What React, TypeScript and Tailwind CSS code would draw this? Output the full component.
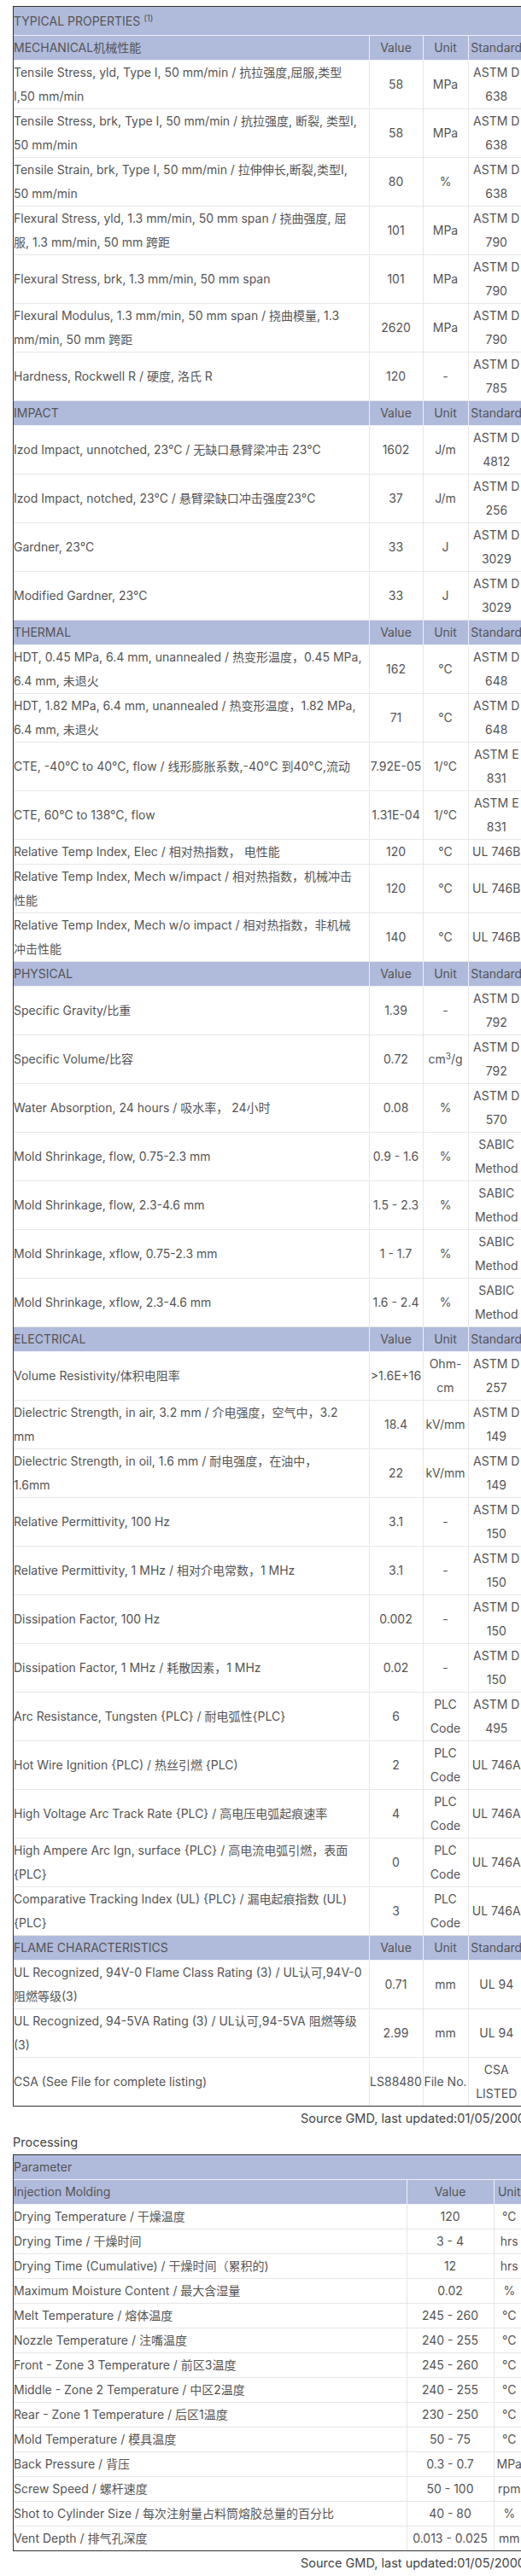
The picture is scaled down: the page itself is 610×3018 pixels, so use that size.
import React from "react";

type Row = [string, string, React.ReactNode, string];

// "\n" marks where the description wraps in the original layout
const sections: { title: string; rows: Row[] }[] = [
  {
    title: "MECHANICAL机械性能",
    rows: [
      ["Tensile Stress, yld, Type I, 50 mm/min / 抗拉强度,屈服,类型\nI,50 mm/min", "58", "MPa", "ASTM D 638"],
      ["Tensile Stress, brk, Type I, 50 mm/min / 抗拉强度, 断裂, 类型I,\n50 mm/min", "58", "MPa", "ASTM D 638"],
      ["Tensile Strain, brk, Type I, 50 mm/min / 拉伸伸长,断裂,类型I,\n50 mm/min", "80", "%", "ASTM D 638"],
      ["Flexural Stress, yld, 1.3 mm/min, 50 mm span / 挠曲强度, 屈\n服, 1.3 mm/min, 50 mm 跨距", "101", "MPa", "ASTM D 790"],
      ["Flexural Stress, brk, 1.3 mm/min, 50 mm span", "101", "MPa", "ASTM D 790"],
      ["Flexural Modulus, 1.3 mm/min, 50 mm span / 挠曲模量, 1.3\nmm/min, 50 mm 跨距", "2620", "MPa", "ASTM D 790"],
      ["Hardness, Rockwell R / 硬度, 洛氏 R", "120", "-", "ASTM D 785"],
    ],
  },
  {
    title: "IMPACT",
    rows: [
      ["Izod Impact, unnotched, 23°C / 无缺口悬臂梁冲击 23°C", "1602", "J/m", "ASTM D 4812"],
      ["Izod Impact, notched, 23°C / 悬臂梁缺口冲击强度23°C", "37", "J/m", "ASTM D 256"],
      ["Gardner, 23°C", "33", "J", "ASTM D 3029"],
      ["Modified Gardner, 23°C", "33", "J", "ASTM D 3029"],
    ],
  },
  {
    title: "THERMAL",
    rows: [
      ["HDT, 0.45 MPa, 6.4 mm, unannealed / 热变形温度，0.45 MPa,\n6.4 mm, 未退火", "162", "°C", "ASTM D 648"],
      ["HDT, 1.82 MPa, 6.4 mm, unannealed / 热变形温度，1.82 MPa,\n6.4 mm, 未退火", "71", "°C", "ASTM D 648"],
      ["CTE, -40°C to 40°C, flow / 线形膨胀系数,-40°C 到40°C,流动", "7.92E-05", "1/°C", "ASTM E 831"],
      ["CTE, 60°C to 138°C, flow", "1.31E-04", "1/°C", "ASTM E 831"],
      ["Relative Temp Index, Elec / 相对热指数， 电性能", "120", "°C", "UL 746B"],
      ["Relative Temp Index, Mech w/impact / 相对热指数，机械冲击\n性能", "120", "°C", "UL 746B"],
      ["Relative Temp Index, Mech w/o impact / 相对热指数，非机械\n冲击性能", "140", "°C", "UL 746B"],
    ],
  },
  {
    title: "PHYSICAL",
    rows: [
      ["Specific Gravity/比重", "1.39", "-", "ASTM D 792"],
      ["Specific Volume/比容", "0.72", <>cm<sup className="text-[10px]">3</sup>/g</>, "ASTM D 792"],
      ["Water Absorption, 24 hours / 吸水率， 24小时", "0.08", "%", "ASTM D 570"],
      ["Mold Shrinkage, flow, 0.75-2.3 mm", "0.9 - 1.6", "%", "SABIC Method"],
      ["Mold Shrinkage, flow, 2.3-4.6 mm", "1.5 - 2.3", "%", "SABIC Method"],
      ["Mold Shrinkage, xflow, 0.75-2.3 mm", "1 - 1.7", "%", "SABIC Method"],
      ["Mold Shrinkage, xflow, 2.3-4.6 mm", "1.6 - 2.4", "%", "SABIC Method"],
    ],
  },
  {
    title: "ELECTRICAL",
    rows: [
      ["Volume Resistivity/体积电阻率", ">1.6E+16", <>Ohm-<br />cm</>, "ASTM D 257"],
      ["Dielectric Strength, in air, 3.2 mm / 介电强度，空气中，3.2\nmm", "18.4", "kV/mm", "ASTM D 149"],
      ["Dielectric Strength, in oil, 1.6 mm / 耐电强度，在油中，\n1.6mm", "22", "kV/mm", "ASTM D 149"],
      ["Relative Permittivity, 100 Hz", "3.1", "-", "ASTM D 150"],
      ["Relative Permittivity, 1 MHz / 相对介电常数，1 MHz", "3.1", "-", "ASTM D 150"],
      ["Dissipation Factor, 100 Hz", "0.002", "-", "ASTM D 150"],
      ["Dissipation Factor, 1 MHz / 耗散因素，1 MHz", "0.02", "-", "ASTM D 150"],
      ["Arc Resistance, Tungsten {PLC} / 耐电弧性{PLC}", "6", "PLC Code", "ASTM D 495"],
      ["Hot Wire Ignition {PLC) / 热丝引燃 {PLC)", "2", "PLC Code", "UL 746A"],
      ["High Voltage Arc Track Rate {PLC} / 高电压电弧起痕速率", "4", "PLC Code", "UL 746A"],
      ["High Ampere Arc Ign, surface {PLC} / 高电流电弧引燃，表面\n{PLC}", "0", "PLC Code", "UL 746A"],
      ["Comparative Tracking Index (UL) {PLC} / 漏电起痕指数 (UL)\n{PLC}", "3", "PLC Code", "UL 746A"],
    ],
  },
  {
    title: "FLAME CHARACTERISTICS",
    rows: [
      ["UL Recognized, 94V-0 Flame Class Rating (3) / UL认可,94V-0\n阻燃等级(3)", "0.71", "mm", "UL 94"],
      ["UL Recognized, 94-5VA Rating (3) / UL认可,94-5VA 阻燃等级\n(3)", "2.99", "mm", "UL 94"],
      ["CSA (See File for complete listing)", "LS88480", "File No.", "CSA LISTED"],
    ],
  },
];

const processing: [string, string, string][] = [
  ["Drying Temperature / 干燥温度", "120", "°C"],
  ["Drying Time / 干燥时间", "3 - 4", "hrs"],
  ["Drying Time (Cumulative) / 干燥时间（累积的)", "12", "hrs"],
  ["Maximum Moisture Content / 最大含湿量", "0.02", "%"],
  ["Melt Temperature / 熔体温度", "245 - 260", "°C"],
  ["Nozzle Temperature / 注嘴温度", "240 - 255", "°C"],
  ["Front - Zone 3 Temperature / 前区3温度", "245 - 260", "°C"],
  ["Middle - Zone 2 Temperature / 中区2温度", "240 - 255", "°C"],
  ["Rear - Zone 1 Temperature / 后区1温度", "230 - 250", "°C"],
  ["Mold Temperature / 模具温度", "50 - 75", "°C"],
  ["Back Pressure / 背压", "0.3 - 0.7", "MPa"],
  ["Screw Speed / 螺杆速度", "50 - 100", "rpm"],
  ["Shot to Cylinder Size / 每次注射量占料筒熔胶总量的百分比", "40 - 80", "%"],
  ["Vent Depth / 排气孔深度", "0.013 - 0.025", "mm"],
];

const head = "bg-[#b0badb] border border-[#eef0f8] p-0 font-normal leading-[28px]";
const cell = "border border-[#e6e6e6] p-0 leading-[28px] align-middle";

export default function App() {
  return (
    <div
      className="w-[610px] overflow-hidden bg-white text-[14px] text-[#555]"
      style={{ fontFamily: 'Inter, "Noto Sans CJK SC", sans-serif' }}
    >
      <div className="ml-[15px] w-[600px] pt-[7px]">
        <div className="border border-[#333]">
          <table className="w-full table-fixed border-collapse border-hidden">
            <colgroup>
              <col className="w-[416px]" />
              <col className="w-[63px]" />
              <col className="w-[53px]" />
              <col />
            </colgroup>
            <tbody>
              <tr>
                <th colSpan={4} className={`${head} text-left leading-[33px]`}>
                  TYPICAL PROPERTIES <sup className="text-[10px] leading-none">(1)</sup>
                </th>
              </tr>
              {sections.map((s) => (
                <React.Fragment key={s.title}>
                  <tr>
                    <th className={`${head} text-left`}>{s.title}</th>
                    <th className={`${head} text-center`}>Value</th>
                    <th className={`${head} text-center`}>Unit</th>
                    <th className={`${head} text-center`}>Standard</th>
                  </tr>
                  {s.rows.map((r, i) => (
                    <tr key={i}>
                      <td className={`${cell} text-left whitespace-pre-line`}>{r[0]}</td>
                      <td className={`${cell} text-center`}>{r[1]}</td>
                      <td className={`${cell} text-center`}>{r[2]}</td>
                      <td className={`${cell} text-center`}>{r[3]}</td>
                    </tr>
                  ))}
                </React.Fragment>
              ))}
            </tbody>
          </table>
        </div>
        <div className="text-right text-[14.5px] leading-[28px] text-[#444]">Source GMD, last updated:01/05/2000</div>

        <div className="text-[14.5px] leading-[28px] text-[#444]">Processing</div>
        <div className="border border-[#333]">
          <table className="w-full table-fixed border-collapse border-hidden">
            <colgroup>
              <col className="w-[460px]" />
              <col className="w-[102px]" />
              <col />
            </colgroup>
            <tbody>
              <tr>
                <th colSpan={3} className={`${head} text-left`}>Parameter</th>
              </tr>
              <tr>
                <th className={`${head} text-left`}>Injection Molding</th>
                <th className={`${head} text-center`}>Value</th>
                <th className={`${head} text-center`}>Unit</th>
              </tr>
              {processing.map((r) => (
                <tr key={r[0]}>
                  <td className={`${cell} text-left`}>{r[0]}</td>
                  <td className={`${cell} text-center`}>{r[1]}</td>
                  <td className={`${cell} text-center`}>{r[2]}</td>
                </tr>
              ))}
            </tbody>
          </table>
        </div>
        <div className="text-right text-[14.5px] leading-[28px] text-[#444]">Source GMD, last updated:01/05/2000</div>
      </div>
    </div>
  );
}
